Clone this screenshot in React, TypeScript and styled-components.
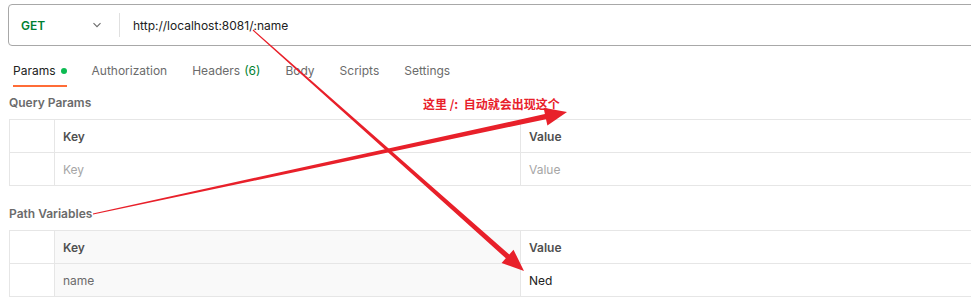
import React from 'react'
import styled, { createGlobalStyle } from 'styled-components'

const GlobalStyle = createGlobalStyle`
  html, body {
    margin: 0;
    padding: 0;
    background: #ffffff;
    overflow: hidden;
  }
  body {
    font-family: Inter, "Noto Sans", "Noto Sans CJK SC", sans-serif;
    color: #212121;
  }
`

const Page = styled.div`
  position: relative;
  width: 971px;
  height: 301px;
  overflow: hidden;
`

const UrlBar = styled.div`
  display: flex;
  align-items: center;
  margin: 4px 0 0 8px;
  width: 990px;
  height: 40px;
  border: 1px solid #a8a8a8;
  border-radius: 4px;
`

const Method = styled.div`
  box-sizing: border-box;
  display: flex;
  align-items: center;
  justify-content: space-between;
  width: 110px;
  padding: 0 17px 0 12px;
  font-size: 12px;
  font-weight: 600;
  color: #007f31;
`

const Divider = styled.div`
  width: 1px;
  height: 24px;
  background: #e0e0e0;
`

const UrlText = styled.div`
  padding-left: 13px;
  font-size: 12px;
  color: #212121;
`

const Tabs = styled.div`
  display: flex;
  margin: 17px 0 0 13px;
`

const Tab = styled.div<{ $active?: boolean }>`
  position: relative;
  display: flex;
  align-items: center;
  margin-right: 25px;
  padding: 0 0 8px;
  line-height: 16px;
  font-size: 12px;
  color: ${(p) => (p.$active ? '#212121' : '#6b6b6b')};
  &::after {
    content: '';
    display: ${(p) => (p.$active ? 'block' : 'none')};
    position: absolute;
    left: 0;
    right: 0;
    bottom: 0;
    height: 2px;
    background: #ff6c37;
  }
`

const Dot = styled.span`
  width: 6px;
  height: 6px;
  border-radius: 50%;
  background: #0cbb52;
  margin: 0 0 0 5px;
`

const Count = styled.span`
  color: #007f31;
  margin-left: 4px;
`

const SectionTitle = styled.div<{ $top: number }>`
  margin: ${(p) => p.$top}px 0 0 9px;
  height: 16px;
  line-height: 16px;
  font-size: 12px;
  font-weight: 600;
  color: #6b6b6b;
`

const Table = styled.div`
  display: grid;
  grid-template-columns: 45px 466px 470px;
  margin: 8px 0 0 9px;
  border-top: 1px solid #e6e6e6;
  border-left: 1px solid #e6e6e6;
  width: 990px;
`

const Cell = styled.div<{ $head?: boolean; $muted?: boolean; $shade?: boolean }>`
  height: 32px;
  display: flex;
  align-items: center;
  padding-left: 8px;
  border-right: 1px solid #e6e6e6;
  border-bottom: 1px solid #e6e6e6;
  font-size: 12px;
  font-weight: ${(p) => (p.$head ? 600 : 400)};
  color: ${(p) => (p.$head ? '#505050' : p.$muted ? '#a6a6a6' : '#6b6b6b')};
  background: ${(p) => (p.$shade ? '#f9f9f9' : '#ffffff')};
`

const ValueCell = styled(Cell)<{ $strong?: boolean }>`
  color: ${(p) => (p.$head ? '#505050' : p.$strong ? '#212121' : '#a6a6a6')};
`

const Overlay = styled.svg`
  position: absolute;
  left: 0;
  top: 0;
  pointer-events: none;
`

const Note = styled.div`
  position: absolute;
  left: 423px;
  top: 95px;
  font-size: 12px;
  font-weight: 700;
  color: #e8202a;
  font-family: "Noto Sans CJK SC", "Noto Sans", sans-serif;
  white-space: pre;
`

const Chevron = () => (
  <svg width="10" height="10" viewBox="0 0 10 10">
    <path d="M1.5 3.2 L5 6.7 L8.5 3.2" fill="none" stroke="#6b6b6b" strokeWidth="1.1" />
  </svg>
)

// tapered arrow: thin tail, thicker shaft, triangle head
const arrowPoints = (sx: number, sy: number, tx: number, ty: number) => {
  const dx = tx - sx
  const dy = ty - sy
  const len = Math.hypot(dx, dy)
  const ux = dx / len
  const uy = dy / len
  const nx = -uy
  const ny = ux
  const headLen = 22
  const headW = 9
  const tail = 0.6
  const shaft = 2.6
  const bx = tx - ux * headLen
  const by = ty - uy * headLen
  const pts = [
    [sx + nx * tail, sy + ny * tail],
    [bx + nx * shaft, by + ny * shaft],
    [bx + nx * headW, by + ny * headW],
    [tx, ty],
    [bx - nx * headW, by - ny * headW],
    [bx - nx * shaft, by - ny * shaft],
    [sx - nx * tail, sy - ny * tail],
  ]
  return pts.map((p) => `${p[0].toFixed(1)},${p[1].toFixed(1)}`).join(' ')
}

const App: React.FC = () => {
  return (
    <Page>
      <GlobalStyle />
      <UrlBar>
        <Method>
          GET
          <Chevron />
        </Method>
        <Divider />
        <UrlText>http://localhost:8081/:name</UrlText>
      </UrlBar>

      <Tabs>
        <Tab $active>
          Params
          <Dot />
        </Tab>
        <Tab>Authorization</Tab>
        <Tab>
          Headers<Count>(6)</Count>
        </Tab>
        <Tab>Body</Tab>
        <Tab>Scripts</Tab>
        <Tab>Settings</Tab>
      </Tabs>

      <SectionTitle $top={8}>Query Params</SectionTitle>
      <Table>
        <Cell />
        <Cell $head>Key</Cell>
        <ValueCell $head>Value</ValueCell>
        <Cell />
        <Cell $muted>Key</Cell>
        <ValueCell>Value</ValueCell>
      </Table>

      <SectionTitle $top={20}>Path Variables</SectionTitle>
      <Table>
        <Cell />
        <Cell $head $shade>
          Key
        </Cell>
        <ValueCell $head>Value</ValueCell>
        <Cell />
        <Cell $shade>name</Cell>
        <ValueCell $strong>Ned</ValueCell>
      </Table>

      <Note>这里 /:  自动就会出现这个</Note>
      <Overlay width="971" height="301">
        <polygon points={arrowPoints(253, 30, 524, 271)} fill="#e8202a" />
        <polygon points={arrowPoints(93, 214, 567, 112)} fill="#e8202a" />
      </Overlay>
    </Page>
  )
}

export default App
